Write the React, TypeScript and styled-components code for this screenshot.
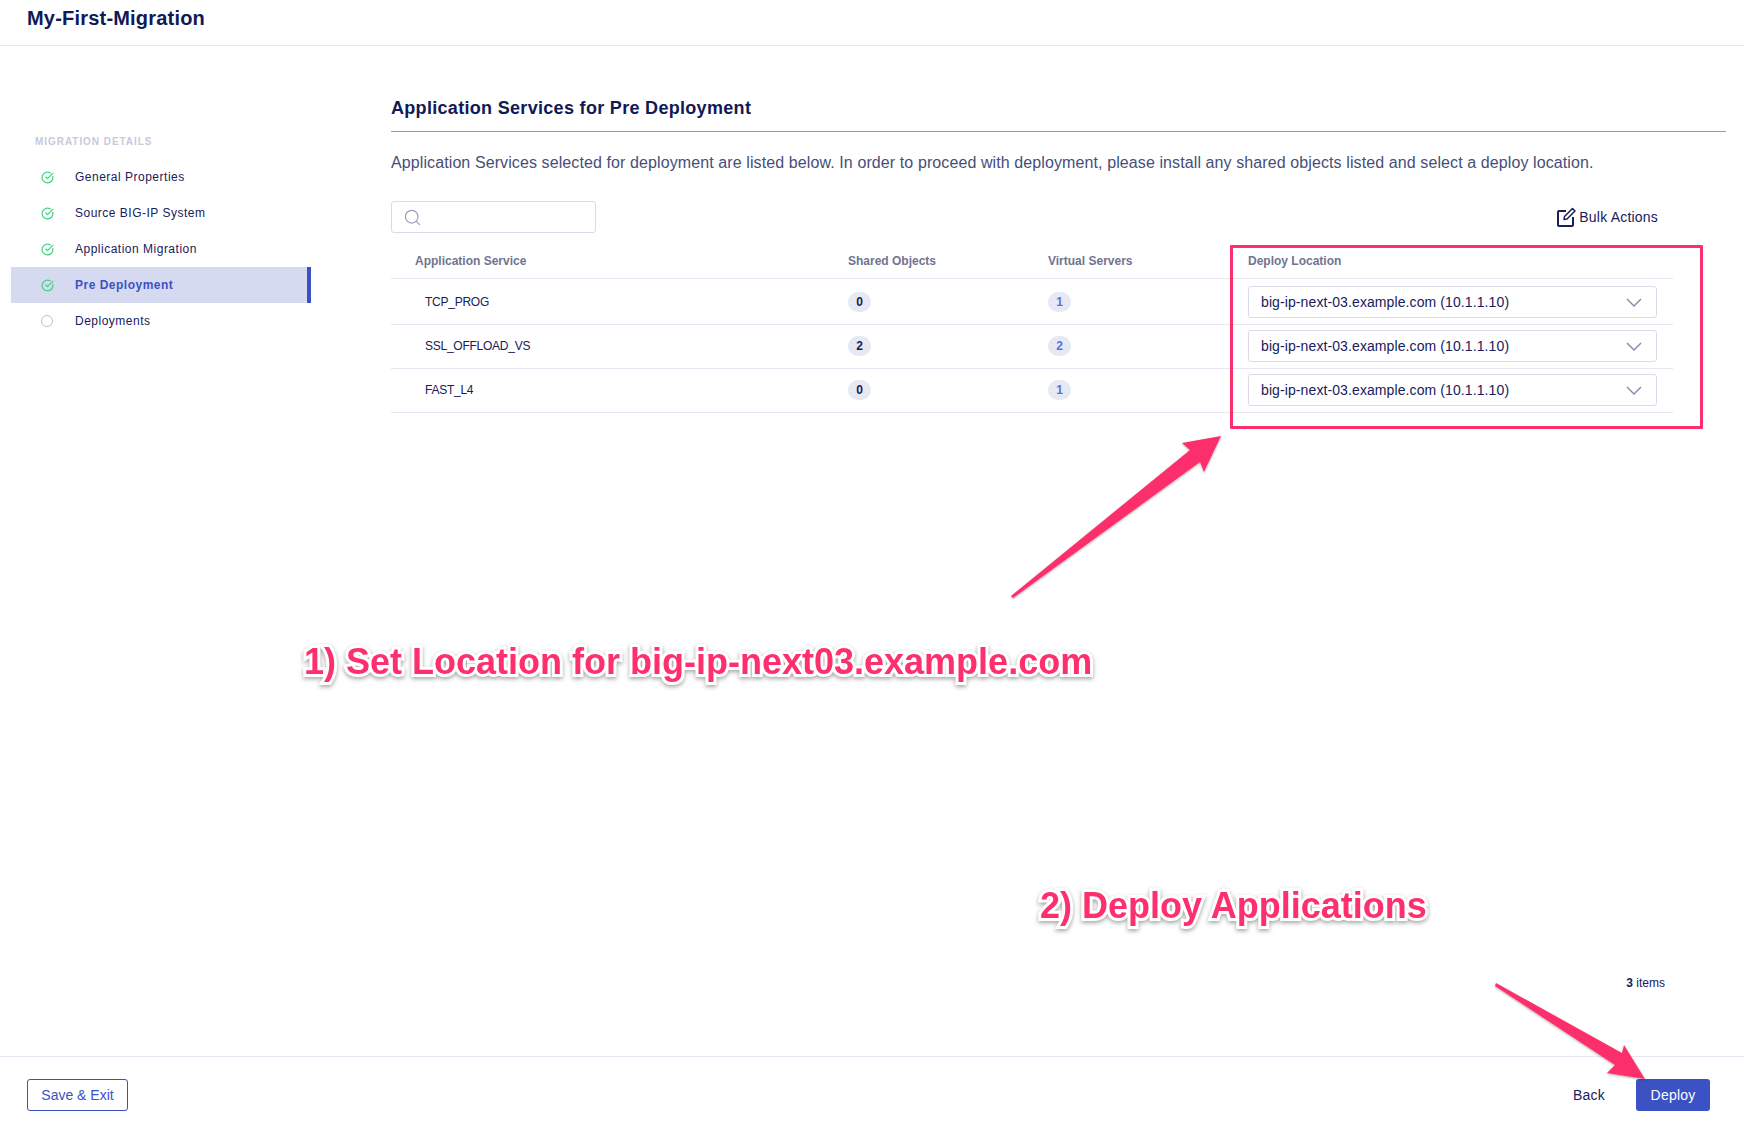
import React from 'react';
import styled, { createGlobalStyle } from 'styled-components';
import { CircleCheckBig, Search } from 'lucide-react';

const navy = '#17205a';
const blue = '#3b51c4';
const line = '#e6e7f2';
const pink = '#fd2f6c';
const sans = '"Liberation Sans", Arial, sans-serif';

const GlobalStyle = createGlobalStyle`
  html, body {
    margin: 0;
    padding: 0;
    background: #fff;
  }
  body {
    font-family: ${sans};
    color: ${navy};
  }
  * {
    box-sizing: border-box;
  }
`;

const Page = styled.div`
  position: relative;
  display: flex;
  flex-direction: column;
  width: 1744px;
  height: 1128px;
  overflow: hidden;
`;

const Header = styled.header`
  flex: none;
  height: 46px;
  padding: 6px 0 0 27px;
  border-bottom: 1px solid ${line};
`;

const AppTitle = styled.h1`
  margin: 0;
  font-size: 20px;
  line-height: 24px;
  font-weight: 700;
  letter-spacing: 0.2px;
  color: #101a56;
`;

const Body = styled.div`
  flex: 1;
  display: flex;
  min-height: 0;
`;

const Sidebar = styled.nav`
  flex: none;
  width: 300px;
  margin-left: 11px;
  padding-top: 90px;
`;

const SideLabel = styled.div`
  padding-left: 24px;
  margin-bottom: 11px;
  font-size: 10px;
  line-height: 12px;
  font-weight: 700;
  letter-spacing: 0.95px;
  color: #c7c9dc;
`;

const SideItem = styled.div<{ $active?: boolean }>`
  display: flex;
  align-items: center;
  height: 36px;
  padding-left: 30px;
  font-size: 12px;
  font-weight: ${(p) => (p.$active ? 700 : 400)};
  letter-spacing: 0.5px;
  color: ${(p) => (p.$active ? blue : navy)};
  background: ${(p) => (p.$active ? '#d6daf0' : 'transparent')};
  border-right: ${(p) => (p.$active ? `4px solid ${blue}` : 'none')};
`;

const StepIcon = styled.span`
  display: flex;
  align-items: center;
  justify-content: flex-start;
  width: 13px;
  margin-right: 21px;
  color: #3bd67c;
`;

const EmptyStep = styled.span`
  display: block;
  width: 12px;
  height: 12px;
  border: 1.5px solid #bcc0d6;
  border-radius: 50%;
`;

const Main = styled.main`
  flex: 1;
  display: flex;
  flex-direction: column;
  min-width: 0;
  margin-left: 80px;
  padding: 50px 18px 0 0;
`;

const SectionTitle = styled.h2`
  margin: 0;
  padding-bottom: 11px;
  font-size: 18px;
  line-height: 24px;
  font-weight: 700;
  letter-spacing: 0.31px;
  color: #101a56;
  border-bottom: 1px solid #9a9ca8;
`;

const Description = styled.p`
  margin: 19px 0 0;
  font-size: 16px;
  line-height: 24px;
  letter-spacing: 0.1px;
  color: #474e79;
`;

const Toolbar = styled.div`
  display: flex;
  align-items: center;
  justify-content: space-between;
  margin-top: 26px;
  padding-right: 68px;
`;

const SearchBox = styled.div`
  display: flex;
  align-items: center;
  width: 205px;
  height: 32px;
  padding-left: 11px;
  border: 1px solid #d9dbe8;
  border-radius: 3px;
  color: #9a9fbb;
`;

const BulkButton = styled.div`
  display: flex;
  align-items: center;
  gap: 3px;
  font-size: 14px;
  letter-spacing: 0.2px;
  color: ${navy};
`;

const Table = styled.div`
  margin: 14px 53px 0 0;
`;

const columns = '457px 200px 200px 1fr';

const HeadRow = styled.div`
  display: grid;
  grid-template-columns: ${columns};
  align-items: center;
  height: 32px;
  padding-bottom: 4px;
  border-bottom: 1px solid ${line};
`;

const HeadCell = styled.div<{ $first?: boolean }>`
  padding-left: ${(p) => (p.$first ? '24px' : '0')};
  font-size: 12px;
  font-weight: 700;
  color: #6f7590;
`;

const Row = styled.div`
  display: grid;
  grid-template-columns: ${columns};
  align-items: center;
  padding: 5px 0 6px;
  border-bottom: 1px solid ${line};
  &:nth-child(2) {
    padding-top: 7px;
  }
`;

const ServiceName = styled.div`
  padding-left: 34px;
  font-size: 12px;
  letter-spacing: -0.25px;
  color: ${navy};
`;

const Count = styled.span<{ $muted?: boolean }>`
  display: inline-flex;
  align-items: center;
  justify-content: center;
  width: 23px;
  height: 20px;
  border-radius: 10px;
  background: #e6e8f3;
  font-size: 12px;
  font-weight: 700;
  color: ${(p) => (p.$muted ? '#5873e4' : navy)};
`;

const Select = styled.div`
  display: flex;
  align-items: center;
  justify-content: space-between;
  width: 409px;
  height: 32px;
  padding: 0 14px 0 12px;
  border: 1px solid #d9dbe8;
  border-radius: 3px;
  font-size: 14px;
  letter-spacing: 0.1px;
  color: ${navy};
`;

const ItemCount = styled.div`
  margin: auto 61px 65px 0;
  text-align: right;
  font-size: 12px;
  line-height: 16px;
  color: ${navy};
  b {
    font-weight: 700;
  }
`;

const Footer = styled.footer`
  flex: none;
  display: flex;
  justify-content: space-between;
  height: 72px;
  padding: 22px 34px 0 27px;
  border-top: 1px solid ${line};
`;

const OutlineButton = styled.button`
  width: 101px;
  height: 32px;
  padding: 0;
  border: 1px solid ${blue};
  border-radius: 3px;
  background: #fff;
  font: 400 14px ${sans};
  color: ${blue};
`;

const FooterActions = styled.div`
  display: flex;
  align-items: flex-start;
  gap: 31px;
`;

const TextButton = styled.button`
  height: 32px;
  padding: 0;
  border: none;
  background: none;
  font: 400 14px ${sans};
  letter-spacing: 0.2px;
  color: ${navy};
`;

const PrimaryButton = styled.button`
  width: 74px;
  height: 32px;
  padding: 0;
  border: none;
  border-radius: 3px;
  background: ${blue};
  font: 400 14px ${sans};
  letter-spacing: 0.2px;
  color: #fff;
`;

const Highlight = styled.div`
  position: absolute;
  left: 1230px;
  top: 245px;
  width: 473px;
  height: 184px;
  border: 3px solid ${pink};
  border-radius: 1px;
`;

const Callout = styled.div<{ $left: number; $top: number }>`
  position: absolute;
  left: ${(p) => p.$left}px;
  top: ${(p) => p.$top}px;
  font-family: ${sans};
  font-size: 36px;
  line-height: 44px;
  font-weight: 700;
  white-space: nowrap;
  color: ${pink};
  -webkit-text-stroke: 6px #fff;
  paint-order: stroke fill;
  filter: drop-shadow(0 2px 2px rgba(0, 0, 0, 0.35));
`;

const Arrows = styled.svg`
  position: absolute;
  left: 0;
  top: 0;
  pointer-events: none;
`;

function Chevron() {
  return (
    <svg width="16" height="9" viewBox="0 0 16 9" fill="none">
      <path d="M1 1l7 7 7-7" stroke="#8a8fae" strokeWidth="1.5" />
    </svg>
  );
}

function EditIcon() {
  return (
    <svg width="19" height="20" viewBox="0 0 19 20" fill="none" stroke="currentColor">
      <path d="M9 4H2a1 1 0 0 0-1 1v13a1 1 0 0 0 1 1h13a1 1 0 0 0 1-1v-8" strokeWidth="2" />
      <path d="M7.5 9.5 15.5 1.5 18 4l-8 8-3 .5z" strokeWidth="1.5" strokeLinejoin="round" />
    </svg>
  );
}

const steps = [
  { label: 'General Properties', done: true },
  { label: 'Source BIG-IP System', done: true },
  { label: 'Application Migration', done: true },
  { label: 'Pre Deployment', done: true, active: true },
  { label: 'Deployments', done: false },
];

const services = [
  { name: 'TCP_PROG', shared: 0, virtual: 1 },
  { name: 'SSL_OFFLOAD_VS', shared: 2, virtual: 2 },
  { name: 'FAST_L4', shared: 0, virtual: 1 },
];

export default function App() {
  return (
    <Page>
      <GlobalStyle />
      <Header>
        <AppTitle>My-First-Migration</AppTitle>
      </Header>
      <Body>
        <Sidebar>
          <SideLabel>MIGRATION DETAILS</SideLabel>
          {steps.map((step) => (
            <SideItem key={step.label} $active={step.active}>
              <StepIcon>
                {step.done ? <CircleCheckBig size={13} strokeWidth={2.2} /> : <EmptyStep />}
              </StepIcon>
              {step.label}
            </SideItem>
          ))}
        </Sidebar>
        <Main>
          <SectionTitle>Application Services for Pre Deployment</SectionTitle>
          <Description>
            Application Services selected for deployment are listed below. In order to proceed with
            deployment, please install any shared objects listed and select a deploy location.
          </Description>
          <Toolbar>
            <SearchBox>
              <Search size={19} strokeWidth={1.5} />
            </SearchBox>
            <BulkButton>
              <EditIcon />
              Bulk Actions
            </BulkButton>
          </Toolbar>
          <Table>
            <HeadRow>
              <HeadCell $first>Application Service</HeadCell>
              <HeadCell>Shared Objects</HeadCell>
              <HeadCell>Virtual Servers</HeadCell>
              <HeadCell>Deploy Location</HeadCell>
            </HeadRow>
            {services.map((service) => (
              <Row key={service.name}>
                <ServiceName>{service.name}</ServiceName>
                <div>
                  <Count>{service.shared}</Count>
                </div>
                <div>
                  <Count $muted>{service.virtual}</Count>
                </div>
                <Select>
                  big-ip-next-03.example.com (10.1.1.10)
                  <Chevron />
                </Select>
              </Row>
            ))}
          </Table>
          <ItemCount>
            <b>3</b> items
          </ItemCount>
        </Main>
      </Body>
      <Footer>
        <OutlineButton>Save &amp; Exit</OutlineButton>
        <FooterActions>
          <TextButton>Back</TextButton>
          <PrimaryButton>Deploy</PrimaryButton>
        </FooterActions>
      </Footer>

      <Highlight />
      <Arrows width="1744" height="1128" viewBox="0 0 1744 1128">
        <defs>
          <filter id="arrowShadow" x="-10%" y="-10%" width="120%" height="120%">
            <feDropShadow dx="0" dy="1" stdDeviation="1" floodColor="#000" floodOpacity="0.35" />
          </filter>
        </defs>
        <g fill={pink} filter="url(#arrowShadow)">
          <path d="M1011 596 L1190 450 L1182 443 L1221 436 L1204 472 L1200 462 L1013 598 Z" />
          <path d="M1496 983 L1622 1053 L1624 1045 L1645 1079 L1607 1073 L1615 1065 L1495 986 Z" />
        </g>
      </Arrows>
      <Callout $left={304} $top={640}>1) Set Location for big-ip-next03.example.com</Callout>
      <Callout $left={1040} $top={884}>2) Deploy Applications</Callout>
    </Page>
  );
}
